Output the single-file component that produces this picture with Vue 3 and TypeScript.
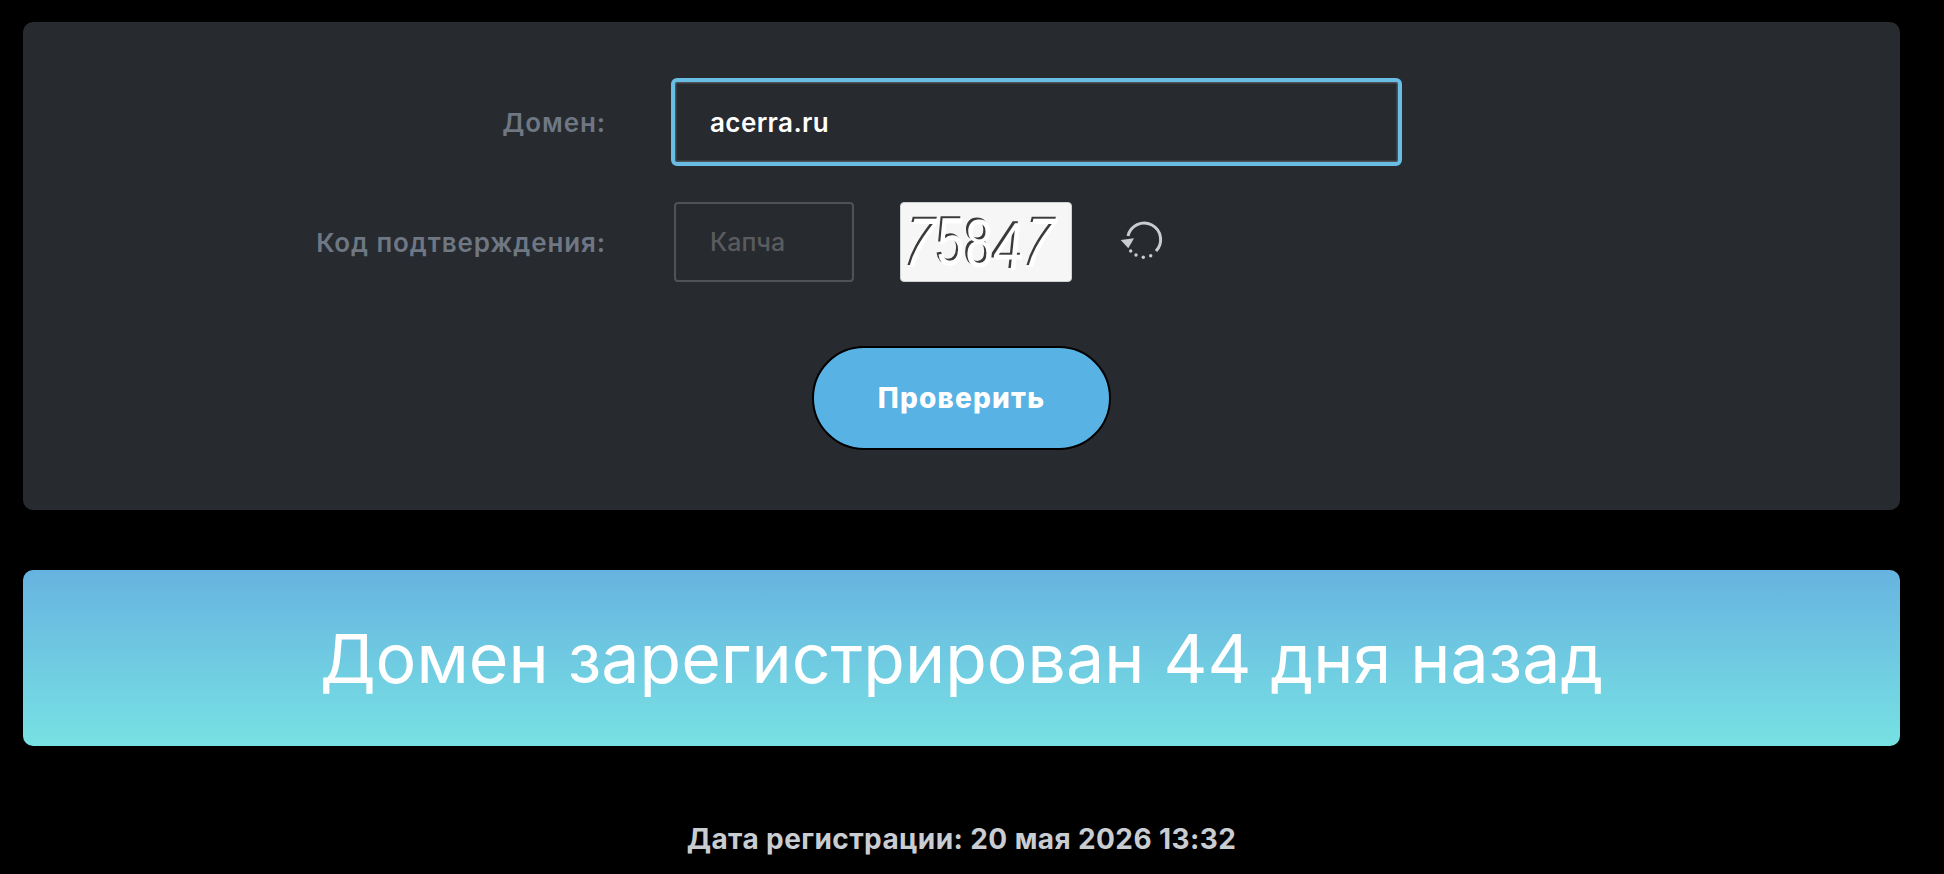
<script setup lang="ts">
import { ref } from 'vue'

const domain = ref<string>('acerra.ru')
const captcha = ref<string>('')
const dots: [number, number][] = [
  [10.7, 28],
  [16, 32],
  [23.3, 34.3],
  [30.7, 32.7],
]
const digits = [
  { ch: '7', x: -3, y: 62, sk: -14, sx: 0.76, fs: 70 },
  { ch: '5', x: 33, y: 60, sk: -3, sx: 0.74, fs: 68 },
  { ch: '8', x: 62, y: 62, sk: 0, sx: 0.74, fs: 68 },
  { ch: '4', x: 88, y: 65, sk: -6, sx: 0.82, fs: 68 },
  { ch: '7', x: 116, y: 62, sk: -14, sx: 0.76, fs: 70 },
]
</script>

<template>
  <main class="page">
    <section class="panel">
      <div class="row">
        <label class="label" for="domain">Домен:</label>
        <input id="domain" v-model="domain" class="field field-domain" type="text" />
      </div>
      <div class="row">
        <label class="label" for="captcha">Код подтверждения:</label>
        <div class="captcha-group">
          <input id="captcha" v-model="captcha" class="field field-captcha" type="text" placeholder="Капча" />
          <div class="captcha-img">
            <svg width="170" height="78" viewBox="0 0 170 78">
              <g
                v-for="(d, i) in digits"
                :key="i"
                :transform="`translate(${d.x} ${d.y}) skewX(${d.sk}) scale(${d.sx} 1)`"
                class="digit"
                :font-size="d.fs"
              >
                <text class="digit-dark">{{ d.ch }}</text>
                <text class="digit-light" x="3" y="2">{{ d.ch }}</text>
              </g>
            </svg>
          </div>
          <button class="refresh" type="button" aria-label="Обновить">
            <svg width="44" height="38" viewBox="0 0 44 38" fill="none">
              <path d="M8 13A16.5 16.5 0 1 1 36 28" stroke="#c9cdd2" stroke-width="3" />
              <path d="M0.7 17L14 15.3L8.3 25.3Z" fill="#c9cdd2" />
              <circle v-for="(p, i) in dots" :key="i" :cx="p[0]" :cy="p[1]" r="1.7" fill="#c9cdd2" />
            </svg>
          </button>
        </div>
      </div>
      <div class="actions">
        <button class="submit" type="button">Проверить</button>
      </div>
    </section>

    <section class="banner">Домен зарегистрирован 44 дня назад</section>

    <p class="date">Дата регистрации: 20 мая 2026 13:32</p>
  </main>
</template>

<style scoped>
.page {
  padding: 22px 44px 0 23px;
  font-family: Inter, "Noto Sans", sans-serif;
}
.panel {
  background: #272a2f;
  border-radius: 10px;
  padding: 56px 0 60px;
}
.row {
  display: grid;
  grid-template-columns: 583px 1fr;
  column-gap: 65px;
  align-items: center;
  margin-bottom: 36px;
}
.row:nth-child(2) {
  margin-bottom: 0;
}
.label {
  text-align: right;
  color: #6e7783;
  font-size: 26px;
  font-weight: 600;
  letter-spacing: 0.9px;
}
.field {
  box-sizing: border-box;
  background: #272a2f;
  color: #fff;
  font: inherit;
  outline: none;
  border-radius: 6px;
}
.field-domain {
  width: 731px;
  height: 88px;
  border: 4px solid #69bde4;
  box-shadow: inset 0 0 0 1.5px #4c5157;
  padding: 0 35px;
  font-size: 26px;
  font-weight: 600;
  letter-spacing: 0.4px;
}
.field-captcha {
  width: 180px;
  height: 80px;
  border: 2px solid #4f5256;
  border-radius: 4px;
  padding: 0 34px;
  margin-left: 3px;
  font-size: 25px;
  font-weight: 500;
}
.field-captcha::placeholder {
  color: #5a5b5e;
  opacity: 1;
}
.captcha-group {
  display: flex;
  align-items: center;
}
.captcha-img {
  box-sizing: border-box;
  width: 172px;
  height: 80px;
  margin-left: 46px;
  background: #f5f6f5;
  border: 1px solid #cfd0d0;
  border-radius: 4px;
}
.captcha-img svg {
  display: block;
}
.digit {
  font-family: "Liberation Sans", sans-serif;
}
.digit-dark {
  fill: #3a3a3c;
}
.digit-light {
  fill: #fff;
}
.refresh {
  width: 44px;
  height: 38px;
  margin-left: 48px;
  padding: 0;
  border: 0;
  background: none;
}
.refresh svg {
  display: block;
  overflow: visible;
}
.actions {
  display: flex;
  justify-content: center;
  margin-top: 64px;
}
.submit {
  box-sizing: border-box;
  width: 299px;
  height: 104px;
  border: 2px solid #000;
  border-radius: 52px;
  background: #58b2e3;
  color: #fff;
  font: inherit;
  font-size: 28px;
  font-weight: 800;
  letter-spacing: 1.2px;
}
.banner {
  margin-top: 60px;
  height: 176px;
  border-radius: 10px;
  background: linear-gradient(180deg, #67b3e0, #77e1e3);
  color: #fff;
  font-size: 68px;
  font-weight: 400;
  display: flex;
  align-items: center;
  justify-content: center;
}
.date {
  margin: 76px 0 0;
  text-align: center;
  color: #c9cdd2;
  font-size: 28px;
  font-weight: 700;
  letter-spacing: 0.4px;
}
</style>

<style>
html,
body {
  margin: 0;
  background: #000;
  overflow: hidden;
}
</style>
